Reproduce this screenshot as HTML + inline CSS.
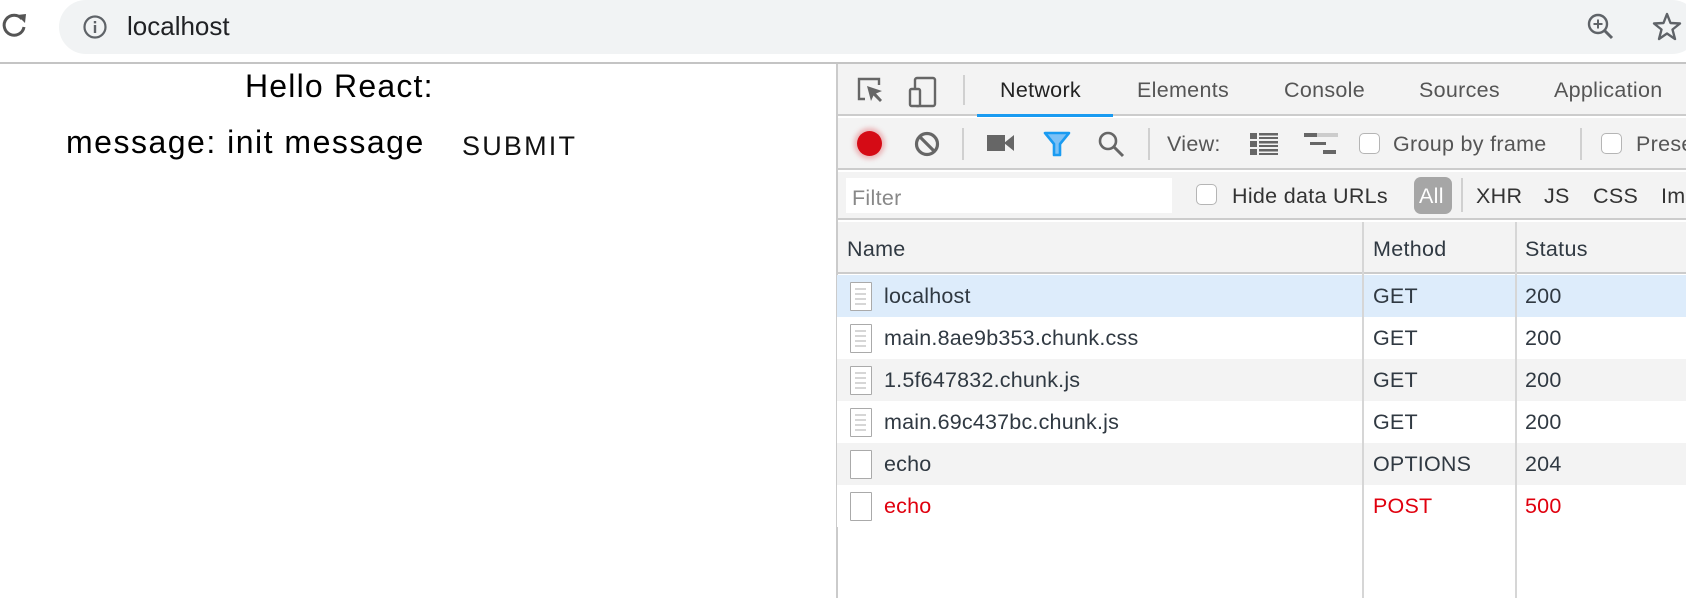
<!DOCTYPE html>
<html><head><meta charset="utf-8"><style>
*{margin:0;padding:0;box-sizing:border-box}
body{width:1686px;height:598px;overflow:hidden;background:#fff;font-family:"Liberation Sans",sans-serif;position:relative}
.a{position:absolute;white-space:nowrap}
.dt{font-size:21.5px;color:#333;letter-spacing:0.3px}
.cb{position:absolute;width:21px;height:21px;border:1.5px solid #b5b5b5;border-radius:5px;background:#fff}
.sep{position:absolute;width:2px;background:#d0d0d0}
.row{position:absolute;left:837px;width:849px;height:42px}
.row .n,.row .m,.row .s{position:absolute;top:9px;font-size:21.5px;color:#303942;letter-spacing:0.2px}
.row .n{left:47px}.row .m{left:536px}.row .s{left:688px}
.ic{position:absolute;left:13px;top:7px;width:22px;height:29px;border:1.5px solid #aaa;background:#fff;border-radius:1px}
.ic i{position:absolute;left:4px;height:2px;background:#d6d6d6;width:11px}
</style></head><body>
<svg class="a" style="left:0;top:10px" width="30" height="30" viewBox="0 0 30 30"><path d="M22 9 A10 10 0 1 0 24 17" fill="none" stroke="#555" stroke-width="3"/><path d="M17 5 L26 4 L25 13 Z" fill="#555"/></svg>
<div class="a" style="left:59px;top:0;width:1640px;height:54px;background:#f1f3f4;border-radius:27px"></div>
<svg class="a" style="left:82px;top:14px" width="26" height="26" viewBox="0 0 26 26"><circle cx="13" cy="13" r="10.5" fill="none" stroke="#5f6368" stroke-width="2.2"/><rect x="11.8" y="11" width="2.4" height="8" fill="#5f6368"/><rect x="11.8" y="7" width="2.4" height="2.4" fill="#5f6368"/></svg>
<div class="a" style="left:127px;top:11px;font-size:26px;color:#202124">localhost</div>
<svg class="a" style="left:1586px;top:12px" width="30" height="30" viewBox="0 0 30 30"><circle cx="12" cy="12" r="9" fill="none" stroke="#5f6368" stroke-width="2.4"/><path d="M18.5 18.5 L26 26" stroke="#5f6368" stroke-width="3"/><path d="M12 7.5v9M7.5 12h9" stroke="#5f6368" stroke-width="2"/></svg>
<svg class="a" style="left:1651px;top:11px" width="32" height="32" viewBox="0 0 32 32"><path d="M16 3 L19.5 12 L29 12.5 L21.5 18.5 L24 28 L16 22.5 L8 28 L10.5 18.5 L3 12.5 L12.5 12 Z" fill="none" stroke="#5f6368" stroke-width="2.4" stroke-linejoin="round"/></svg>
<div class="a" style="left:0;top:62px;width:1686px;height:2px;background:#c4c4c4"></div>
<div class="a" style="left:245px;top:68px;font-size:32px;color:#000;letter-spacing:1.2px">Hello React:</div>
<div class="a" style="left:66px;top:124px;font-size:32px;color:#000;letter-spacing:1.5px">message: init message</div>
<div class="a" style="left:462px;top:131px;font-size:27px;color:#111;letter-spacing:2.2px">SUBMIT</div>
<div class="a" style="left:836px;top:64px;width:850px;height:534px;background:#fff;border-left:2px solid #cbcbcb"></div>
<div class="a" style="left:838px;top:64px;width:848px;height:52px;background:#f3f3f3;border-bottom:2px solid #ccc"></div>
<svg class="a" style="left:856px;top:76px" width="30" height="30" viewBox="0 0 30 30"><path d="M9 23H3V3H23V9" fill="none" stroke="#666" stroke-width="2.4"/><path d="M11 10 L26 15 L20 17.5 L26 24 L24 26 L17.5 19.5 L15 25 Z" fill="#666"/></svg>
<svg class="a" style="left:908px;top:76px" width="30" height="32" viewBox="0 0 30 32"><rect x="7" y="2" width="20" height="28" rx="2" fill="none" stroke="#666" stroke-width="2.4"/><rect x="2" y="13" width="10" height="17" rx="1.5" fill="#f3f3f3" stroke="#666" stroke-width="2.4"/></svg>
<div class="sep" style="left:963px;top:75px;height:30px"></div>
<div class="a dt" style="left:1000px;top:78px;color:#222">Network</div>
<div class="a" style="left:977px;top:114px;width:136px;height:3px;background:#1a9bf1"></div>
<div class="a dt" style="left:1137px;top:78px;color:#555">Elements</div>
<div class="a dt" style="left:1284px;top:78px;color:#555">Console</div>
<div class="a dt" style="left:1419px;top:78px;color:#555">Sources</div>
<div class="a dt" style="left:1554px;top:78px;color:#555">Application</div>
<div class="a" style="left:838px;top:118px;width:848px;height:52px;background:#f3f3f3;border-bottom:2px solid #ccc"></div>
<div class="a" style="left:857px;top:131px;width:25px;height:25px;border-radius:50%;background:#d50b15;box-shadow:0 0 5px 3px rgba(220,60,70,.35)"></div>
<svg class="a" style="left:914px;top:131px" width="26" height="26" viewBox="0 0 26 26"><circle cx="13" cy="13" r="10.5" fill="none" stroke="#666" stroke-width="3.2"/><path d="M6 6L20 20" stroke="#666" stroke-width="3.2"/></svg>
<div class="sep" style="left:962px;top:128px;height:32px"></div>
<svg class="a" style="left:987px;top:133px" width="28" height="20" viewBox="0 0 28 20"><rect x="0" y="2" width="18" height="16" fill="#666"/><path d="M17 10 L27 2 V18 Z" fill="#666"/></svg>
<svg class="a" style="left:1043px;top:131px" width="28" height="26" viewBox="0 0 28 26"><path d="M2 2H26L17 13V24H11V13Z" fill="#7cc1f6" stroke="#1a9bf1" stroke-width="2.6" stroke-linejoin="round"/></svg>
<svg class="a" style="left:1097px;top:130px" width="28" height="28" viewBox="0 0 28 28"><circle cx="11" cy="11" r="8" fill="none" stroke="#666" stroke-width="2.6"/><path d="M17 17L26 26" stroke="#666" stroke-width="3"/></svg>
<div class="sep" style="left:1148px;top:128px;height:32px"></div>
<div class="a dt" style="left:1167px;top:132px;color:#555">View:</div>
<svg class="a" style="left:1250px;top:133px" width="28" height="22" viewBox="0 0 28 22"><g fill="#666"><rect x="0" y="0" width="7" height="6"/><rect x="9" y="0" width="19" height="2.5"/><rect x="9" y="4" width="19" height="2"/><rect x="0" y="8" width="7" height="6"/><rect x="9" y="8" width="19" height="2.5"/><rect x="9" y="12" width="19" height="2"/><rect x="0" y="16" width="7" height="6"/><rect x="9" y="16" width="19" height="2.5"/><rect x="9" y="20" width="19" height="2"/></g></svg>
<svg class="a" style="left:1304px;top:133px" width="34" height="22" viewBox="0 0 34 22"><rect x="0" y="0" width="34" height="4" fill="#ccc"/><rect x="0" y="0" width="13" height="4" fill="#666"/><rect x="6" y="9" width="16" height="3" fill="#666"/><rect x="19" y="17" width="13" height="4" fill="#666"/></svg>
<div class="cb" style="left:1359px;top:133px"></div>
<div class="a dt" style="left:1393px;top:132px;color:#555">Group by frame</div>
<div class="sep" style="left:1580px;top:128px;height:32px"></div>
<div class="cb" style="left:1601px;top:133px"></div>
<div class="a dt" style="left:1636px;top:132px;color:#555">Preserve log</div>
<div class="a" style="left:838px;top:172px;width:848px;height:48px;background:#f3f3f3;border-bottom:2px solid #ccc"></div>
<div class="a" style="left:846px;top:178px;width:326px;height:35px;background:#fff"></div>
<div class="a dt" style="left:852px;top:186px;color:#888">Filter</div>
<div class="cb" style="left:1196px;top:184px"></div>
<div class="a dt" style="left:1232px;top:184px;color:#333">Hide data URLs</div>
<div class="a" style="left:1414px;top:177px;width:38px;height:37px;background:#a6a6a6;border-radius:7px"></div>
<div class="a dt" style="left:1419px;top:184px;color:#fff">All</div>
<div class="sep" style="left:1461px;top:178px;height:34px"></div>
<div class="a dt" style="left:1476px;top:184px;color:#333">XHR</div>
<div class="a dt" style="left:1544px;top:184px;color:#333">JS</div>
<div class="a dt" style="left:1593px;top:184px;color:#333">CSS</div>
<div class="a dt" style="left:1661px;top:184px;color:#333">Img</div>
<div class="a" style="left:838px;top:222px;width:848px;height:52px;background:#f3f3f3;border-bottom:2px solid #ccc"></div>
<div class="a dt" style="left:847px;top:237px;color:#303942">Name</div>
<div class="a dt" style="left:1373px;top:237px;color:#303942">Method</div>
<div class="a dt" style="left:1525px;top:237px;color:#303942">Status</div>
<div class="row" style="top:275px;background:#ddecfb"><div class="ic"><i style="top:5px"></i><i style="top:10px"></i><i style="top:15px"></i><i style="top:20px"></i></div><span class="n">localhost</span><span class="m">GET</span><span class="s">200</span></div>
<div class="row" style="top:317px;background:#fff"><div class="ic"><i style="top:5px"></i><i style="top:10px"></i><i style="top:15px"></i><i style="top:20px"></i></div><span class="n">main.8ae9b353.chunk.css</span><span class="m">GET</span><span class="s">200</span></div>
<div class="row" style="top:359px;background:#f3f3f3"><div class="ic"><i style="top:5px"></i><i style="top:10px"></i><i style="top:15px"></i><i style="top:20px"></i></div><span class="n">1.5f647832.chunk.js</span><span class="m">GET</span><span class="s">200</span></div>
<div class="row" style="top:401px;background:#fff"><div class="ic"><i style="top:5px"></i><i style="top:10px"></i><i style="top:15px"></i><i style="top:20px"></i></div><span class="n">main.69c437bc.chunk.js</span><span class="m">GET</span><span class="s">200</span></div>
<div class="row" style="top:443px;background:#f3f3f3"><div class="ic"></div><span class="n">echo</span><span class="m">OPTIONS</span><span class="s">204</span></div>
<div class="row" style="top:485px;background:#fff"><div class="ic"></div><span class="n" style="color:#e0000e">echo</span><span class="m" style="color:#e0000e">POST</span><span class="s" style="color:#e0000e">500</span></div>
<div class="a" style="left:1362px;top:222px;width:2px;height:376px;background:#d6d6d6"></div>
<div class="a" style="left:1515px;top:222px;width:2px;height:376px;background:#d6d6d6"></div>
</body></html>
